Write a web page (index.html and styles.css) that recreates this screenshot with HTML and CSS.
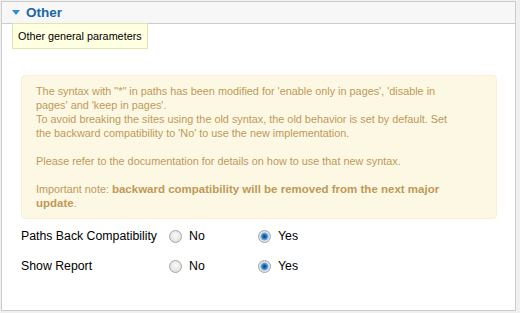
FILE: index.html
```html
<!DOCTYPE html>
<html lang="en">
<head>
    <meta charset="UTF-8">
    <title>Other</title>
    <link rel="stylesheet" href="styles.css">
</head>
<body>
    <div class="panel">
        <h3 class="panel-title"><span class="toggle"></span>Other</h3>
        <div class="tip">Other general parameters</div>
        <div class="panel-body">
            <div class="alert">
                The syntax with "*" in paths has been modified for 'enable only in pages', 'disable in pages' and 'keep in pages'.<br>
                To avoid breaking the sites using the old syntax, the old behavior is set by default. Set the backward compatibility to 'No' to use the new implementation.<br>
                <br>
                Please refer to the documentation for details on how to use that new syntax.<br>
                <br>
                Important note: <b>backward compatibility will be removed from the next major update</b>.
            </div>
            <div class="row">
                <label class="row-label">Paths Back Compatibility</label>
                <label class="choice"><input type="radio" name="compat"> No</label>
                <label class="choice"><input type="radio" name="compat" checked> Yes</label>
            </div>
            <div class="row">
                <label class="row-label">Show Report</label>
                <label class="choice"><input type="radio" name="report"> No</label>
                <label class="choice"><input type="radio" name="report" checked> Yes</label>
            </div>
        </div>
    </div>
</body>
</html>
```

FILE: styles.css
```css
html, body {
    margin: 0;
    height: 100%;
}
body {
    font-family: "Liberation Sans", Arial, sans-serif;
    font-size: 12px;
    color: #000;
    background-color: #f0f0f0;
    padding: 1px 4px 3px 1px;
    box-sizing: border-box;
}
.panel {
    position: relative;
    height: 310px;
    box-sizing: border-box;
    background-color: #fff;
    border: 1px solid #cccccc;
}
.panel-title {
    margin: 0;
    height: 21px;
    padding-left: 10px;
    display: flex;
    align-items: center;
    background-color: #f7f7f7;
    border-bottom: 1px solid #cccccc;
    color: #1a67a3;
    font-size: 13.5px;
    font-weight: bold;
}
.toggle {
    width: 0;
    height: 0;
    margin-right: 6px;
    border-left: 4px solid transparent;
    border-right: 4px solid transparent;
    border-top: 5px solid #2c8fd0;
}
.tip {
    position: absolute;
    left: 10px;
    top: 21px;
    padding: 6px 5px 6px 5px;
    background-color: #ffffe1;
    border: 1px solid #e3e3b0;
    color: #000;
    font-size: 10.8px;
}
.panel-body {
    padding: 51px 18px 0 19px;
}
.alert {
    margin-bottom: 2px;
    padding: 8px 35px 8px 14px;
    background-color: #fcf8e3;
    border: 1px solid #fbeed5;
    border-radius: 4px;
    color: #c09853;
    font-size: 10.85px;
    line-height: 14px;
    text-shadow: 0 1px 0 rgba(255,255,255,0.5);
}
.alert b {
    font-size: 11.5px;
}
.row {
    display: flex;
    align-items: center;
    height: 30px;
}
.row-label {
    width: 148px;
    font-size: 12.3px;
}
.choice {
    width: 89px;
    display: flex;
    align-items: center;
    font-size: 12.3px;
}
.choice input {
    appearance: none;
    width: 13px;
    height: 13px;
    margin: 0 7px 0 0;
    border: 1px solid #a6a6a6;
    border-radius: 50%;
    background: radial-gradient(circle at 50% 40%, #fafafa, #d8d8d8);
    box-sizing: border-box;
}
.choice input:checked {
    background: radial-gradient(circle, #0a3a6a 0, #2a73b5 2px, #6cb0e8 3.5px, #e8e8e8 4.5px, #d8d8d8 6px);
}
```
